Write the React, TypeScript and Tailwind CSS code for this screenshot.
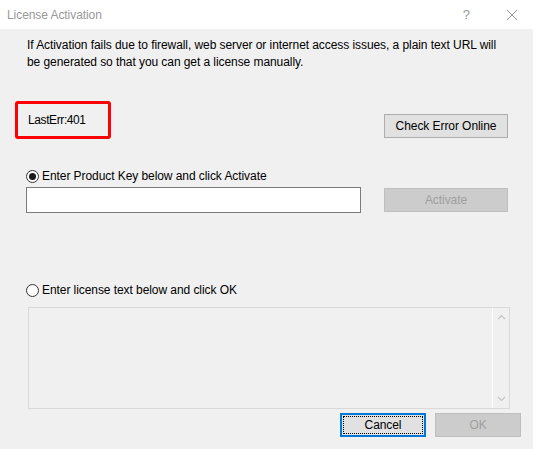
import React from 'react';

const Radio = ({ checked }: { checked?: boolean }) => (
  <span className="w-[13px] h-[13px] rounded-full border border-[#333333] bg-white flex items-center justify-center shrink-0">
    {checked && <span className="w-[7px] h-[7px] rounded-full bg-[#1a1a1a]" />}
  </span>
);

export default function App() {
  return (
    <div className="w-[534px] h-[449px] bg-white overflow-hidden font-['Segoe_UI','Liberation_Sans',sans-serif] text-[12px] tracking-[-0.07px] text-black">
      {/* Title bar */}
      <div className="h-[29px] flex items-center pl-[7px] text-[#999999] bg-white">
        <span>License Activation</span>
        <span className="ml-auto mr-[36px] text-[13px]">?</span>
        <svg width="12" height="12" viewBox="0 0 12 12" className="mr-[16px]">
          <path d="M1 1 L11 11 M11 1 L1 11" stroke="#999999" strokeWidth="1" />
        </svg>
      </div>

      {/* Body */}
      <div className="bg-[#f0f0f0] h-[420px] border-r border-white flex flex-col">
        <p className="pl-[27px] pt-[8px] leading-[17px]">
          If Activation fails due to firewall, web server or internet access issues, a plain text URL will
          <br />
          be generated so that you can get a license manually.
        </p>

        {/* Error row */}
        <div className="flex mt-[30px]">
          <div className="ml-[15px] w-[96px] h-[38px] border-[3px] border-[#ff0000] rounded-[3px] flex items-center pl-[10px] tracking-[-0.4px]">
            LastErr:401
          </div>
          <button className="ml-[273px] self-end mb-[1px] w-[124px] h-[24px] bg-[#e1e1e1] border border-[#adadad]">
            Check Error Online
          </button>
        </div>

        {/* Product key */}
        <label className="flex items-center ml-[26px] mt-[30px] h-[14px] gap-[3px]">
          <Radio checked />
          <span>Enter Product Key below and click Activate</span>
        </label>
        <div className="flex mt-[4px]">
          <div className="ml-[26px] w-[335px] h-[26px] bg-white border border-[#7a7a7a]" />
          <button className="ml-[23px] mt-[1px] w-[124px] h-[24px] bg-[#cccccc] border border-[#bfbfbf] text-[#a0a0a0]">
            Activate
          </button>
        </div>

        {/* License text */}
        <label className="flex items-center ml-[26px] mt-[70px] h-[14px] gap-[3px]">
          <Radio />
          <span>Enter license text below and click OK</span>
        </label>
        <div className="ml-[28px] mt-[10px] w-[482px] h-[102px] border border-[#d9d9d9] bg-[#f0f0f0] flex">
          <div className="ml-auto w-[17px] border-l border-white flex flex-col items-center justify-between py-[6px]">
            <svg width="9" height="6" viewBox="0 0 9 6">
              <path d="M1 5 L4.5 1.5 L8 5" stroke="#c4c4c4" strokeWidth="1.2" fill="none" />
            </svg>
            <svg width="9" height="6" viewBox="0 0 9 6">
              <path d="M1 1 L4.5 4.5 L8 1" stroke="#c4c4c4" strokeWidth="1.2" fill="none" />
            </svg>
          </div>
        </div>

        {/* Dialog buttons */}
        <div className="flex mt-[4px]">
          <button className="ml-[340px] w-[86px] h-[24px] bg-[#e1e1e1] border-2 border-[#0078d7] p-[1px]">
            <span className="w-full h-full flex items-center justify-center border border-dotted border-black">
              Cancel
            </span>
          </button>
          <button className="ml-[9px] w-[86px] h-[24px] bg-[#cccccc] border border-[#bfbfbf] text-[#a0a0a0]">
            OK
          </button>
        </div>
      </div>
    </div>
  );
}
